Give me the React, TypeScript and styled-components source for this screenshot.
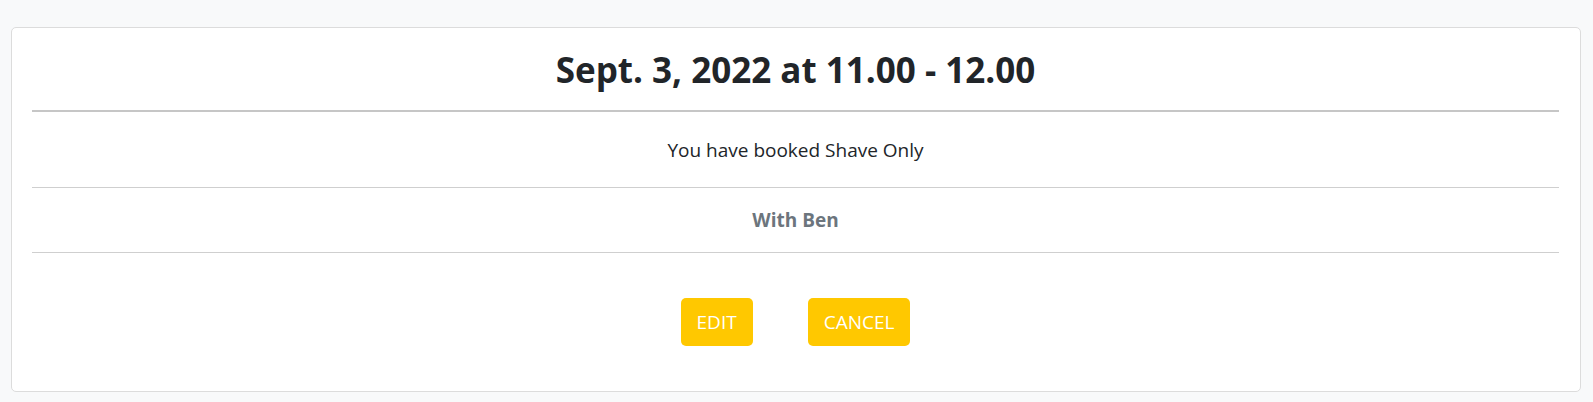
import React from "react";
import styled, { createGlobalStyle } from "styled-components";

const Global = createGlobalStyle`
  html, body { margin: 0; padding: 0; background: #f8f9fa; }
  body { font-family: "Open Sans", "Noto Sans", Arial, sans-serif; color: #212529; }
  * { box-sizing: border-box; }
`;

const Page = styled.main`
  padding: 27px 12px 10px 11px;
`;

const Card = styled.section`
  background: #ffffff;
  border: 1px solid #dcdcdc;
  border-radius: 5px;
  padding: 0 21px 0 20px;
  display: flex;
  flex-direction: column;
`;

const Title = styled.h2`
  margin: 0;
  height: 82px;
  display: flex;
  align-items: center;
  justify-content: center;
  font-size: 35px;
  font-weight: 700;
  color: #212529;
  letter-spacing: 0;
`;

const Rule = styled.hr<{ $thick?: boolean }>`
  margin: 0;
  border: 0;
  height: ${(p) => (p.$thick ? "2px" : "1px")};
  background: ${(p) => (p.$thick ? "#c6c6c6" : "#cfcfcf")};
`;

const Row = styled.p<{ $h: number; $muted?: boolean }>`
  margin: 0;
  height: ${(p) => p.$h}px;
  display: flex;
  align-items: center;
  justify-content: center;
  font-size: 19px;
  font-weight: ${(p) => (p.$muted ? 700 : 400)};
  color: ${(p) => (p.$muted ? "#6c757d" : "#212529")};
`;

const Actions = styled.div`
  height: 138px;
  display: flex;
  align-items: center;
  justify-content: center;
  gap: 55px;
`;

const Button = styled.button`
  height: 48px;
  padding: 0 16px;
  border: 0;
  border-radius: 5px;
  background: #ffc800;
  color: #ffffff;
  font-family: inherit;
  font-size: 19px;
  cursor: pointer;
`;

export default function App() {
  return (
    <>
      <Global />
      <Page>
        <Card>
          <Title>Sept. 3, 2022 at 11.00 - 12.00</Title>
          <Rule $thick />
          <Row $h={75}>You have booked Shave Only</Row>
          <Rule />
          <Row $h={64} $muted>With Ben</Row>
          <Rule />
          <Actions>
            <Button>EDIT</Button>
            <Button>CANCEL</Button>
          </Actions>
        </Card>
      </Page>
    </>
  );
}
